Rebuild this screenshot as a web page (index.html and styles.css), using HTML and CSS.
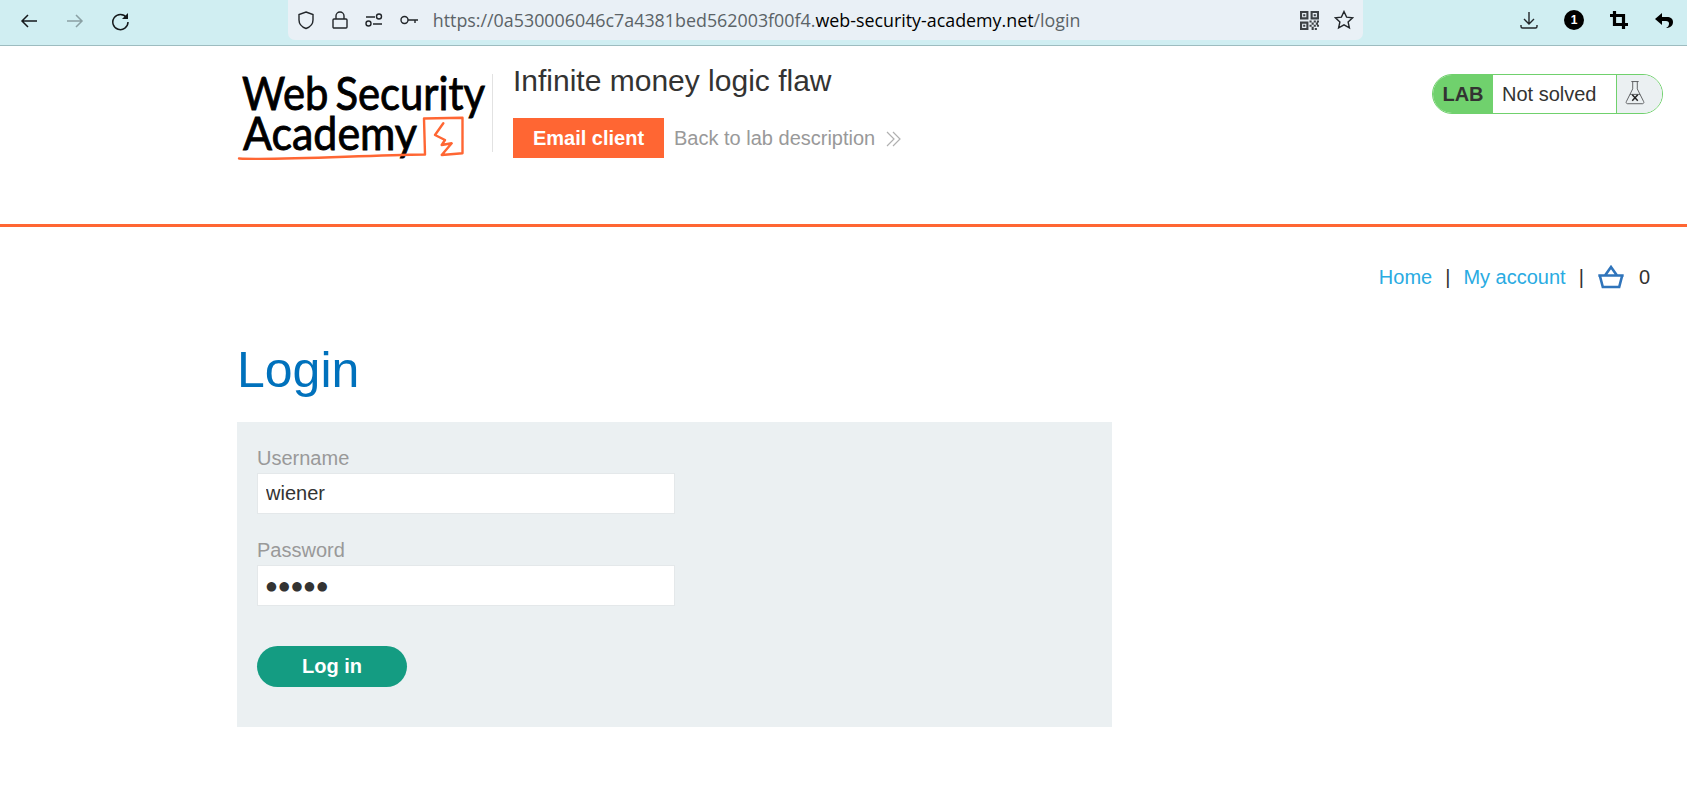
FILE: index.html
```html
<!DOCTYPE html>
<html>
<head>
    <title>Infinite money logic flaw</title>
    <link rel="stylesheet" href="styles.css">
</head>
<body>
    <div class="toolbar">
        <div class="nav-btns">
            <svg class="ico" viewBox="0 0 20 20"><path d="M18 10H3M9 4l-6 6 6 6"/></svg>
            <svg class="ico ico-off" viewBox="0 0 20 20"><path d="M2 10h15M11 4l6 6-6 6"/></svg>
            <svg class="ico" viewBox="0 0 20 20"><path d="M16.500 6.500A7.600 7.600 0 1 0 18 11"/><path class="solid" d="M18 2v6h-6z"/></svg>
        </div>
        <div class="urlbar">
            <svg class="ico ico-slim" viewBox="0 0 20 20"><path d="M10 2l7 2.500v5.500c0 4-3 7-7 8.500-4-1.500-7-4.500-7-8.500V4.500z"/></svg>
            <svg class="ico ico-slim" viewBox="0 0 20 20"><path d="M6 9V6a4 4 0 0 1 8 0v3M4 9h12a1 1 0 0 1 1 1v7a1 1 0 0 1-1 1H4a1 1 0 0 1-1-1v-7a1 1 0 0 1 1-1z"/></svg>
            <svg class="ico ico-slim" viewBox="0 0 20 20"><path d="M2 7h9M9 14h9"/><circle cx="15" cy="6.500" r="2.500"/><circle cx="4.500" cy="13.500" r="2.500"/></svg>
            <svg class="ico ico-slim" viewBox="0 0 20 20"><circle cx="5.500" cy="10" r="3.500"/><path d="M9 10h10M16 10v3"/></svg>
            <span class="url">https://0a530006046c7a4381bed562003f00f4.<b>web-security-academy.net</b>/login</span>
            <svg class="ico ico-qr" viewBox="0 0 18 18">
                <path d="M0 0h8v8H0zM10 0h8v8h-8zM0 10h8v8H0zM2 2v4h4V2zM12 2v4h4V2zM2 12v4h4v-4z" fill-rule="evenodd"/>
                <path d="M3 3h2v2H3zM13 3h2v2h-2zM3 13h2v2H3z"/>
                <path d="M9 9h2v2H9zM13 9h2v2h-2zM16 9h2v2h-2zM11 11h2v2h-2zM15 11h2v2h-2zM9 13h2v2H9zM13 13h2v2h-2zM16 13h2v2h-2zM11 15h2v3h-2zM14 16h2v2h-2z"/>
            </svg>
            <svg class="ico ico-slim" viewBox="0 0 20 20"><path d="M10 1.500l2.600 5.600 6 .7-4.500 4.100 1.300 6-5.400-3.100-5.400 3.100 1.300-6L1.400 7.800l6-.7z"/></svg>
        </div>
        <div class="tools">
            <svg class="ico ico-slim" viewBox="0 0 20 20"><path d="M10 2v12M5 9l5 5 5-5M2 15v1.500A1.500 1.500 0 0 0 3.500 18h13a1.500 1.500 0 0 0 1.500-1.500V15"/></svg>
            <span class="count">1</span>
            <svg class="ico ico-bold" viewBox="0 0 20 20"><path d="M5.500 1v13.500H19M1 5.500h13.500V19"/></svg>
            <svg class="ico ico-fill" viewBox="0 0 20 20"><path d="M8 3L1 9l7 6v-4h4c2 0 3 1 3 2.500 0 2-1 3.500-3 4.500 4.500 0 7-2.500 7-6 0-3.500-2.500-5-6-5H8z"/></svg>
        </div>
    </div>

    <header class="lab-header">
        <svg class="logo" viewBox="0 0 256 100" width="256" height="100">
            <text x="6" y="40" textLength="243" lengthAdjust="spacingAndGlyphs">Web Security</text>
            <text x="7" y="80" textLength="174" lengthAdjust="spacingAndGlyphs">Academy</text>
            <path class="logo-line" d="M3 88.500c40 2 120-3 186-4L188 48.500l38.500-.8v35.600L205.700 85l10-11.700-10 1.700 3.300-5-10-5 8.300-11.700"/>
        </svg>
        <div class="lab-title">
            <h2>Infinite money logic flaw</h2>
            <div class="lab-links">
                <a class="btn-email" href="#">Email client</a>
                <a class="back-link" href="#">Back to lab description
                    <svg viewBox="0 0 16 16" width="16" height="16"><path d="M1 1l7 7-7 7M7 1l7 7-7 7"/></svg>
                </a>
            </div>
        </div>
        <div class="lab-status">
            <span class="lab-tag">LAB</span>
            <span class="lab-state">Not solved</span>
            <span class="lab-flask">
                <svg viewBox="0 0 24 28" width="22" height="26"><path d="M8 1.500h8M9.500 1.500v8L2.500 23.500a1.500 1.500 0 0 0 1.300 2.200h16.400a1.500 1.500 0 0 0 1.300-2.200L14.500 9.500v-8M6.500 15.500h11"/><path class="flask-x" d="M9 16l6 6.500M15 16l-6 6.500"/></svg>
            </span>
        </div>
    </header>

    <nav class="top-links">
        <a href="#">Home</a><span class="sep">|</span>
        <a href="#">My account</a><span class="sep">|</span>
        <svg class="basket" viewBox="0 0 28 24" width="28" height="24"><path d="M1.300 10.500h25.400M2.800 10.500l3 11.500h16.400l3-11.500M8 10.500L14 2l6 8.500"/></svg>
        <span class="basket-count">0</span>
    </nav>

    <main class="content">
        <h1>Login</h1>
        <form class="login-form">
            <label for="username">Username</label>
            <input id="username" type="text" value="wiener">
            <label for="password">Password</label>
            <input id="password" class="dots" type="text" value="●●●●●">
            <button type="button">Log in</button>
        </form>
    </main>
</body>
</html>
```

FILE: styles.css
```css
body {
    margin: 0;
    font-family: "Liberation Sans", Arial, sans-serif;
    font-size: 20px;
    color: #333332;
    background-color: #fff;
}

a {
    text-decoration: none;
}

/* browser bar */
.toolbar {
    display: flex;
    align-items: flex-start;
    height: 45px;
    background-color: #d0eef2;
    border-bottom: 1px solid #9dbcc0;
}

.ico {
    width: 20px;
    height: 20px;
    fill: none;
    stroke: #15191c;
    stroke-width: 1.5;
    flex-shrink: 0;
}

.ico .solid {
    fill: #15191c;
    stroke: none;
}

.ico-off {
    stroke: #8aa0a4;
}

.ico-slim {
    stroke-width: 1.4;
    stroke: #22262a;
}

.ico-qr {
    width: 19px;
    height: 19px;
    fill: #3d4145;
    stroke: none;
}

.ico-bold {
    stroke-width: 3.2;
    stroke: #000;
}

.ico-fill {
    fill: #000;
    stroke: none;
}

.nav-btns {
    display: flex;
    gap: 25.5px;
    width: 268px;
    padding: 11px 0 0 19px;
    box-sizing: border-box;
}

.urlbar {
    display: flex;
    align-items: center;
    width: 1075px;
    height: 40px;
    margin-left: 20px;
    padding: 0 9px 0 8px;
    box-sizing: border-box;
    background-color: #e9f0f6;
    border-radius: 0 0 7px 7px;
}

.urlbar .ico-slim {
    margin-right: 14.200px;
}

.urlbar .ico-slim:last-child {
    margin-right: 0;
    margin-left: 15px;
}

.url {
    flex: 1;
    font-family: "Open Sans", sans-serif;
    font-size: 17.850px;
    color: #5b6367;
    white-space: nowrap;
}

.url b {
    font-weight: 400;
    color: #000;
}

.tools {
    display: flex;
    align-items: center;
    gap: 25px;
    height: 40px;
    margin-left: 156px;
}

.count {
    width: 20px;
    height: 20px;
    line-height: 20px;
    border-radius: 50%;
    background-color: #000;
    color: #fff;
    font-size: 12px;
    font-weight: bold;
    text-align: center;
}

/* lab header */
.lab-header {
    display: flex;
    height: 178px;
    padding-left: 236px;
    border-bottom: 3px solid #ff6633;
    box-sizing: content-box;
}

.logo {
    margin-top: 24px;
}

.logo text {
    font-family: Lato, sans-serif;
    font-size: 47px;
    font-weight: 400;
    word-spacing: -4px;
    fill: #000;
    stroke: #000;
    stroke-width: 0.9;
}

.logo-line {
    fill: none;
    stroke: #ff6633;
    stroke-width: 2.400;
    stroke-linejoin: round;
    stroke-linecap: round;
}

.lab-title {
    padding-left: 20px;
    margin-top: 28px;
    height: 78px;
    border-left: 1px solid #e2e2e2;
}

.lab-title h2 {
    margin: -13px 0 0 0;
    font-size: 30px;
    font-weight: 400;
    line-height: 40px;
}

.lab-links {
    display: flex;
    align-items: center;
    gap: 10px;
    margin-top: 17px;
}

.btn-email {
    display: block;
    width: 151px;
    height: 40px;
    line-height: 40px;
    text-align: center;
    background-color: #ff6633;
    color: #fff;
    font-weight: bold;
}

.back-link {
    color: #999;
}

.back-link svg {
    margin-left: 5px;
    fill: none;
    stroke: #b0b0b0;
    stroke-width: 1.200;
    vertical-align: -2px;
}

.lab-status {
    display: flex;
    width: 231px;
    height: 40px;
    margin: 28px 24px 0 auto;
    border: 1px solid #70d16d;
    border-radius: 20px;
    box-sizing: border-box;
    overflow: hidden;
}

.lab-tag {
    width: 60px;
    line-height: 38px;
    text-align: center;
    background-color: #70d16d;
    font-weight: bold;
}

.lab-state {
    width: 124px;
    padding-left: 9px;
    line-height: 38px;
    box-sizing: border-box;
    border-right: 1px solid #70d16d;
}

.lab-flask {
    flex: 1;
    padding: 5px 0 0 7px;
    background-color: #ebf0f2;
}

.lab-flask svg {
    fill: none;
    stroke: #55585a;
    stroke-width: 1;
}

.lab-flask .flask-x {
    stroke: #222;
    stroke-width: 1.600;
}

/* links under header */
.top-links {
    display: flex;
    align-items: center;
    justify-content: flex-end;
    height: 30px;
    margin-top: 35px;
    padding-right: 37px;
}

.top-links a {
    color: #29abe2;
}

.sep {
    margin: 0 13px;
}

.basket {
    fill: none;
    stroke: #2f74bb;
    stroke-width: 2.600;
}

.basket-count {
    margin-left: 14px;
}

/* login */
.content {
    padding-left: 237px;
}

h1 {
    margin: 40px 0 0 0;
    font-size: 50px;
    font-weight: 400;
    line-height: 76px;
    color: #0071bc;
}

.login-form {
    display: flex;
    flex-direction: column;
    align-items: flex-start;
    width: 875px;
    height: 305px;
    margin-top: 14px;
    padding: 24px 20px 0;
    box-sizing: border-box;
    background-color: #ebf0f2;
}

.login-form label {
    height: 27px;
    line-height: 24px;
    color: #999;
}

.login-form input {
    width: 418px;
    height: 41px;
    margin-bottom: 24px;
    padding: 0 8px;
    box-sizing: border-box;
    border: 1px solid #e4e8ea;
    font-family: inherit;
    font-size: 20px;
    color: #333332;
    background-color: #fff;
    outline: none;
}

.login-form input.dots {
    font-family: "DejaVu Sans", sans-serif;
    font-size: 12.500px;
    letter-spacing: 1.800px;
    margin-bottom: 40px;
}

.login-form button {
    width: 150px;
    height: 41px;
    border: none;
    border-radius: 21px;
    background-color: #149c82;
    color: #fff;
    font-family: inherit;
    font-size: 20px;
    font-weight: bold;
}
```
